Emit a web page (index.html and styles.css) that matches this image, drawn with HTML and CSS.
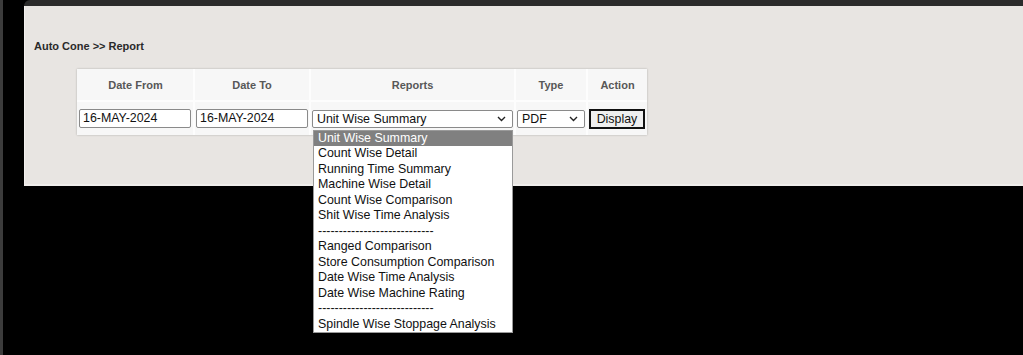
FILE: index.html
```html
<!DOCTYPE html>
<html>
<head>
<meta charset="utf-8">
<link rel="stylesheet" href="styles.css">
</head>
<body>
<div class="frame">
  <div class="left-strip"></div>
  <div class="gap"></div>
  <div class="main">
    <div class="topbar"></div>
    <div class="panel">
      <div class="title">Auto Cone &gt;&gt; Report</div>
      <table class="report-table">
        <colgroup>
          <col class="c1"><col class="c2"><col class="c3"><col class="c4"><col class="c5">
        </colgroup>
        <thead>
          <tr>
            <th>Date From</th>
            <th>Date To</th>
            <th>Reports</th>
            <th>Type</th>
            <th>Action</th>
          </tr>
        </thead>
        <tbody>
          <tr>
            <td><div class="text-input date">16-MAY-2024</div></td>
            <td><div class="text-input date">16-MAY-2024</div></td>
            <td>
              <div class="select-wrap">
                <div class="select reports"><span>Unit Wise Summary</span><svg class="chev" width="9" height="6" viewBox="0 0 9 6"><path d="M1 1 L4.5 4.5 L8 1" fill="none" stroke="#222" stroke-width="1.4"/></svg></div>
                <ul class="dropdown">
                  <li class="active">Unit Wise Summary</li>
                  <li>Count Wise Detail</li>
                  <li>Running Time Summary</li>
                  <li>Machine Wise Detail</li>
                  <li>Count Wise Comparison</li>
                  <li>Shit Wise Time Analysis</li>
                  <li>----------------------------</li>
                  <li>Ranged Comparison</li>
                  <li>Store Consumption Comparison</li>
                  <li>Date Wise Time Analysis</li>
                  <li>Date Wise Machine Rating</li>
                  <li>----------------------------</li>
                  <li>Spindle Wise Stoppage Analysis</li>
                </ul>
              </div>
            </td>
            <td><div class="select type"><span>PDF</span><svg class="chev" width="9" height="6" viewBox="0 0 9 6"><path d="M1 1 L4.5 4.5 L8 1" fill="none" stroke="#222" stroke-width="1.4"/></svg></div></td>
            <td><div class="btn">Display</div></td>
          </tr>
        </tbody>
      </table>
    </div>
  </div>
</div>
</body>
</html>
```
FILE: styles.css
```css
html, body {
  margin: 0;
  padding: 0;
  background: #000;
  height: 355px;
  overflow: hidden;
  font-family: "Liberation Sans", Arial, sans-serif;
}

.frame {
  display: flex;
  height: 355px;
}

.left-strip {
  width: 3px;
  background: #3c3c3c;
}

.gap {
  width: 21px;
}

.main {
  flex: 1;
  display: flex;
  flex-direction: column;
}

.topbar {
  height: 6px;
  background: #2b2b2b;
  border-top-left-radius: 10px;
}

.panel {
  height: 180px;
  box-sizing: border-box;
  background: #e8e5e2;
  border-left: 1px solid #f3f1ef;
  border-bottom: 2px solid #f0eeec;
  padding: 34px 0 0 9px;
}

.title {
  font-size: 11px;
  font-weight: bold;
  color: #2a2a2a;
  line-height: 13px;
  height: 13px;
}

.report-table {
  margin: 16px 0 0 43px;
  border-collapse: collapse;
  background: #f7f7f7;
  box-shadow: 0 0 2px rgba(0, 0, 0, 0.25);
  table-layout: fixed;
}

.c1 { width: 117px; }
.c2 { width: 114px; }
.c3 { width: 205px; }
.c4 { width: 71px; }
.c5 { width: 60px; }

.report-table th,
.report-table td {
  border: 2px solid #fdfdfd;
  padding: 0 1px;
}

.report-table tr > :first-child { border-left: none; padding-left: 2px; }
.report-table tr > :last-child { border-right: none; }
.report-table thead th { border-top: none; }
.report-table tbody td { border-bottom: none; }

.report-table th {
  height: 31px;
  font-size: 11px;
  font-weight: bold;
  color: #585858;
  text-align: center;
  vertical-align: middle;
}

.report-table td {
  height: 33px;
  vertical-align: middle;
}

.text-input {
  box-sizing: border-box;
  height: 19px;
  border: 1px solid #8a8a8a;
  border-radius: 2px;
  background: #fff;
  font-size: 12.4px;
  line-height: 17px;
  padding-left: 3px;
  color: #111;
}

.date {
  width: 112px;
}

.select-wrap {
  position: relative;
}

.select {
  box-sizing: border-box;
  height: 18px;
  border: 1px solid #8a8a8a;
  border-radius: 2px;
  background: #fff;
  font-size: 12.4px;
  line-height: 16px;
  padding-left: 4px;
  color: #111;
  display: flex;
  align-items: center;
  justify-content: space-between;
  padding-right: 6px;
}

.reports {
  width: 201px;
}

.type {
  width: 68px;
}

.chev {
  display: block;
}

.btn {
  box-sizing: border-box;
  width: 56px;
  height: 20px;
  border: 2px solid #111;
  background: #efefef;
  font-size: 12.4px;
  line-height: 16px;
  text-align: center;
  color: #111;
}

.dropdown {
  position: absolute;
  left: 1px;
  top: 20px;
  width: 200px;
  margin: 0;
  padding: 0;
  list-style: none;
  background: #fff;
  border: 1px solid #9a9a9a;
  box-sizing: border-box;
  z-index: 5;
}

.dropdown li {
  font-size: 12.4px;
  line-height: 15.5px;
  height: 15.5px;
  padding-left: 4px;
  color: #111;
  white-space: nowrap;
}

.dropdown li.active {
  background: #808080;
  color: #fff;
}
```
